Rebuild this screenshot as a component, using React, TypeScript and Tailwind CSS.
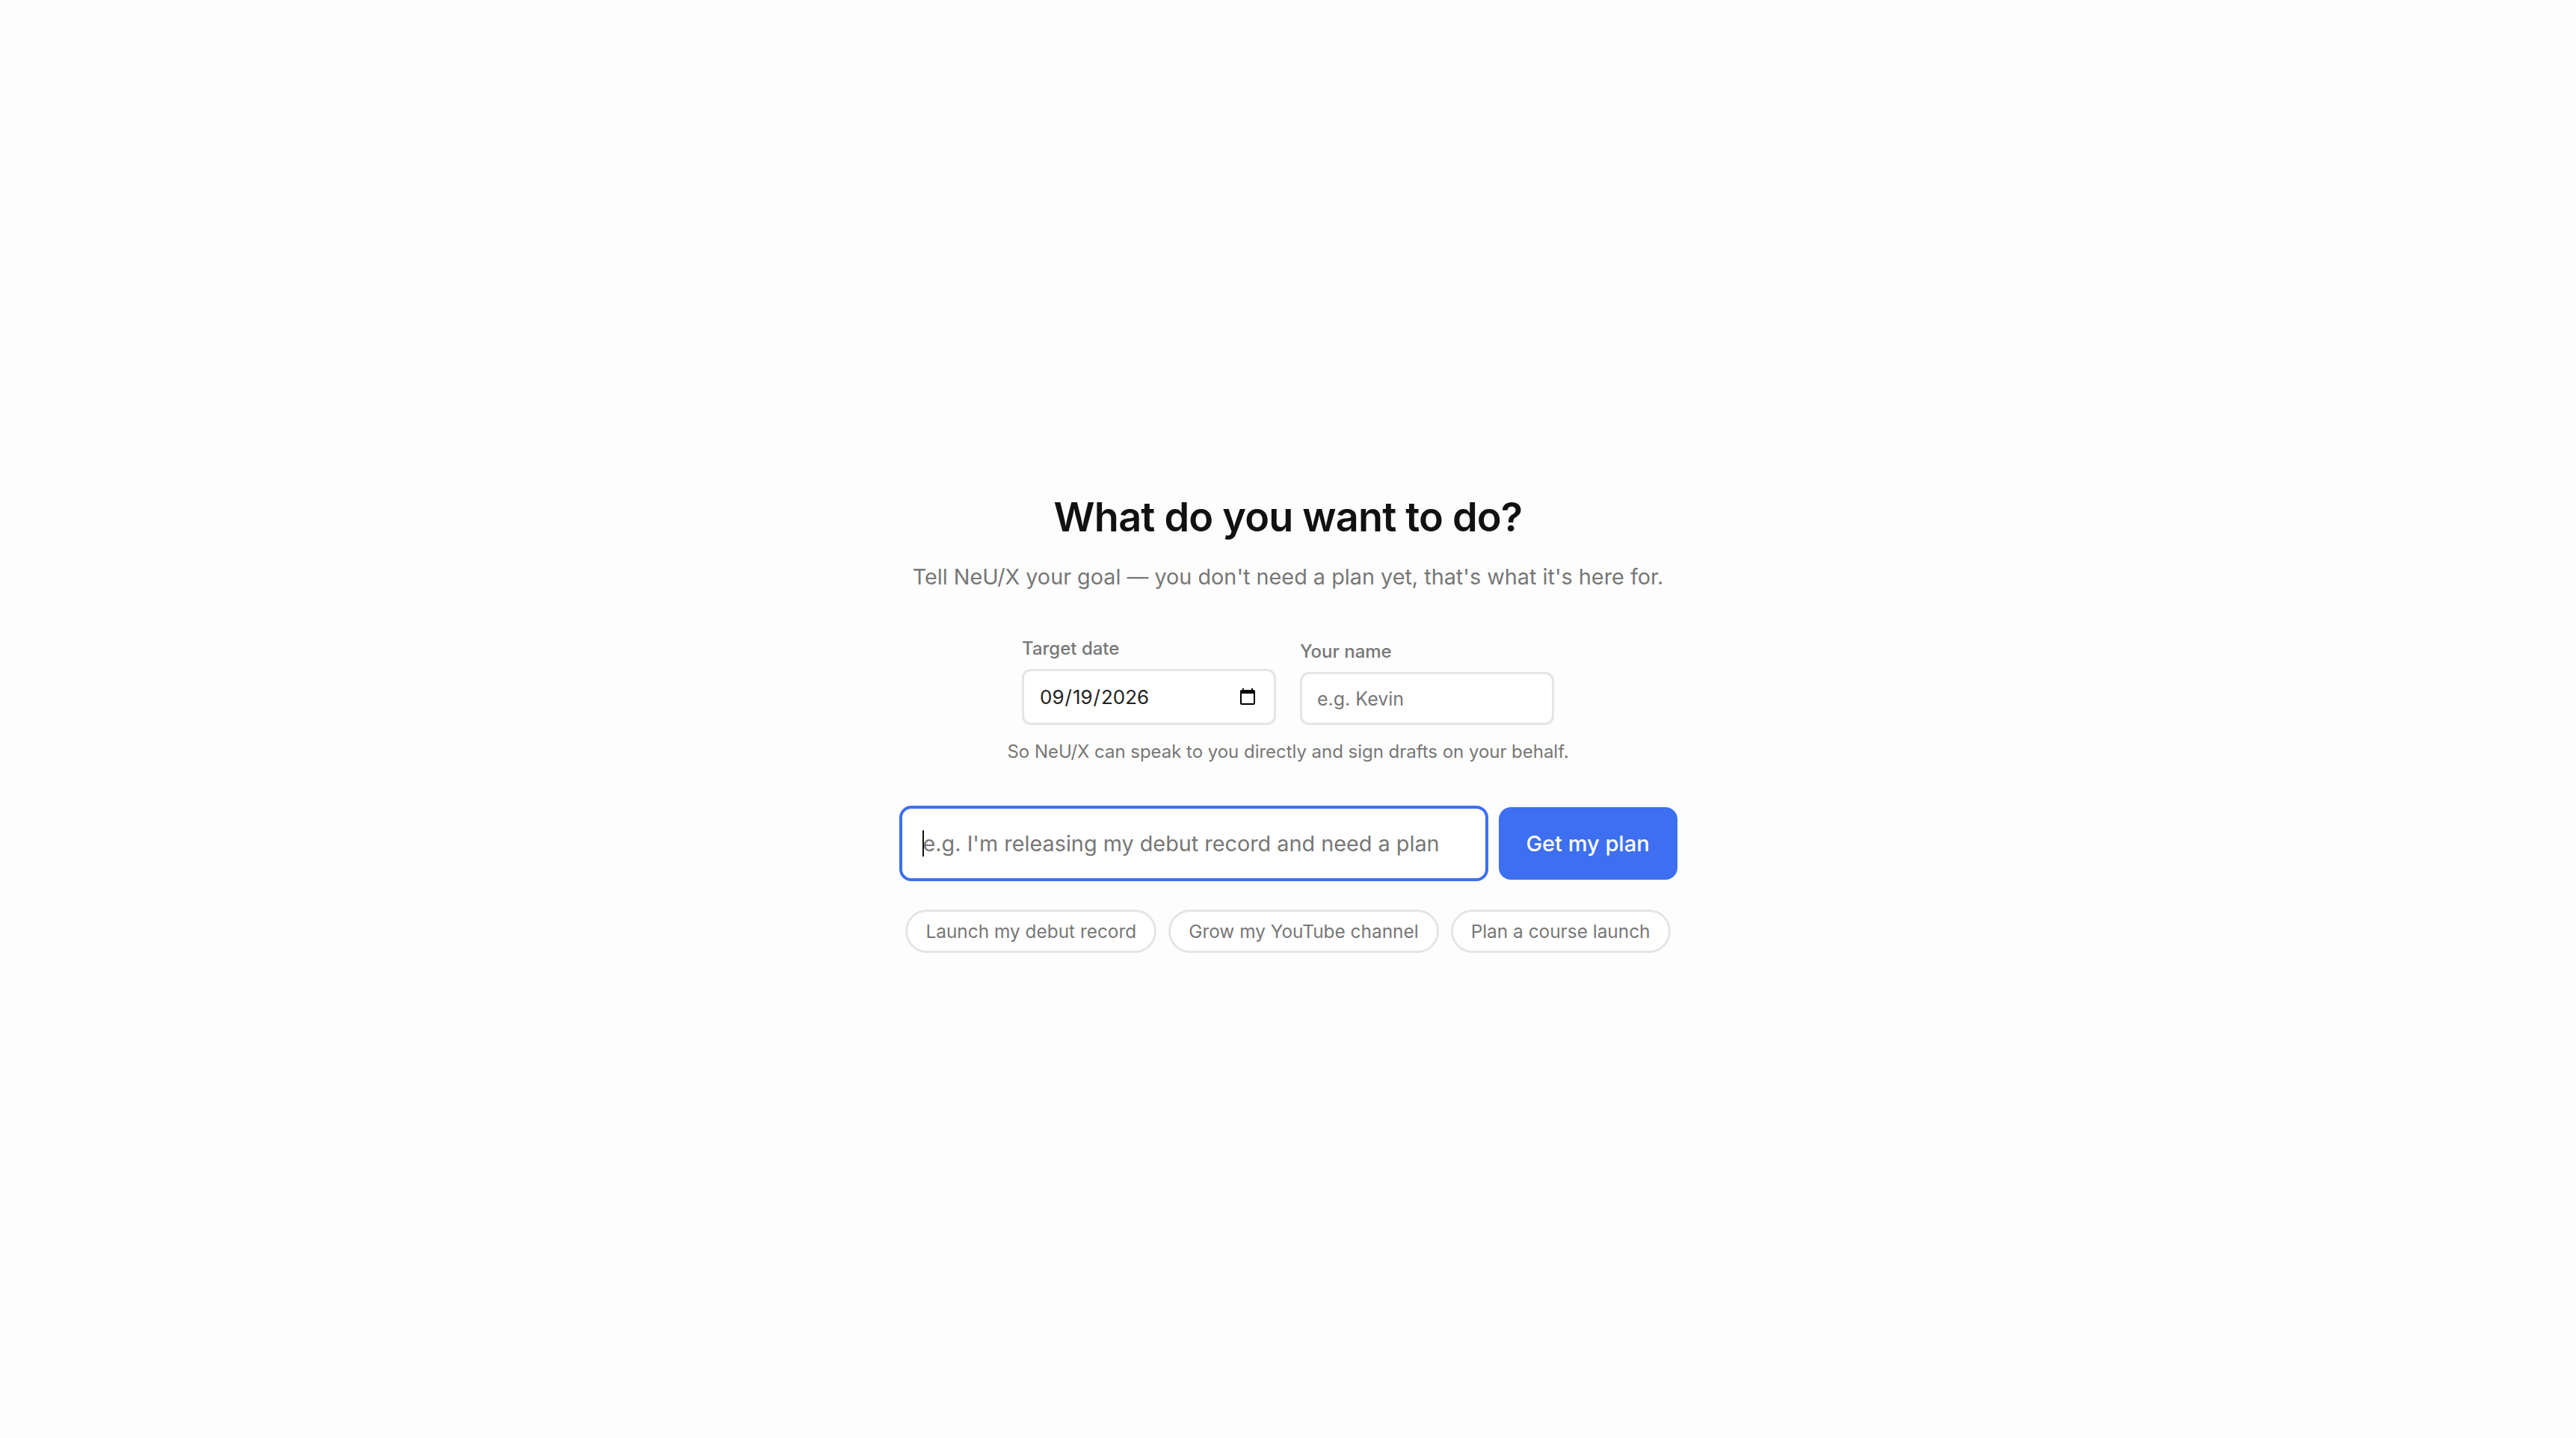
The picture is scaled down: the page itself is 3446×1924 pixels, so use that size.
export default function App() {
  const chips = ['Launch my debut record', 'Grow my YouTube channel', 'Plan a course launch'];

  return (
    <div className="min-h-screen pt-[9px] bg-[#fdfdfd] flex flex-col items-center justify-center font-['Inter',sans-serif]">
      <h1 className="text-[54px] leading-[68px] font-semibold text-[#111111] tracking-[-0.8px]">What do you want to do?</h1>
      <p className="mt-[26px] text-[28.8px] leading-[40px] text-[#777777]">
        Tell NeU/X your goal — you don't need a plan yet, that's what it's here for.
      </p>

      <div className="mt-[59px] flex items-end gap-[32px]">
        <label className="flex flex-col w-[340px]">
          <span className="text-[24px] leading-[34px] mb-[10px] font-medium text-[#777777]">Target date</span>
          <input
            type="date"
            defaultValue="2026-09-19"
            className="h-[75px] px-[20px] border-[3px] border-[#e5e5e5] rounded-[12px] bg-white text-[26px] text-[#222222] outline-none"
          />
        </label>
        <label className="flex flex-col w-[340px]">
          <span className="text-[24px] leading-[34px] mb-[10px] font-medium text-[#777777]">Your name</span>
          <input
            type="text"
            placeholder="e.g. Kevin"
            className="h-[71px] px-[20px] border-[3px] border-[#e5e5e5] rounded-[12px] bg-white text-[25px] text-[#222222] placeholder:text-[#777777] outline-none"
          />
        </label>
      </div>

      <p className="mt-[20px] text-[24px] leading-[32px] text-[#777777] tracking-[-0.03px]">
        So NeU/X can speak to you directly and sign drafts on your behalf.
      </p>

      <div className="mt-[56px] flex items-center gap-[14px]">
        <div className="relative">
          <input
            type="text"
            autoFocus
            placeholder="e.g. I'm releasing my debut record and need a plan"
            className="w-[788px] h-[101px] px-[28px] border-[4px] border-[#3d6ff0] rounded-[16px] bg-white text-[28.8px] text-[#222222] placeholder:text-[#777777] outline-none"
          />
          <span className="absolute left-[31px] top-[33px] w-[2px] h-[35px] bg-[#111111]" />
        </div>
        <button className="w-[239px] h-[97px] rounded-[16px] bg-[#3d6ff0] text-white text-[29px] font-medium">Get my plan</button>
      </div>

      <div className="mt-[38px] flex gap-[16px]">
        {chips.map((c) => (
          <button
            key={c}
            className="h-[58px] px-[24px] rounded-full border-[3px] border-[#e5e5e5] bg-white text-[24.4px] text-[#777777]"
          >
            {c}
          </button>
        ))}
      </div>
    </div>
  );
}
